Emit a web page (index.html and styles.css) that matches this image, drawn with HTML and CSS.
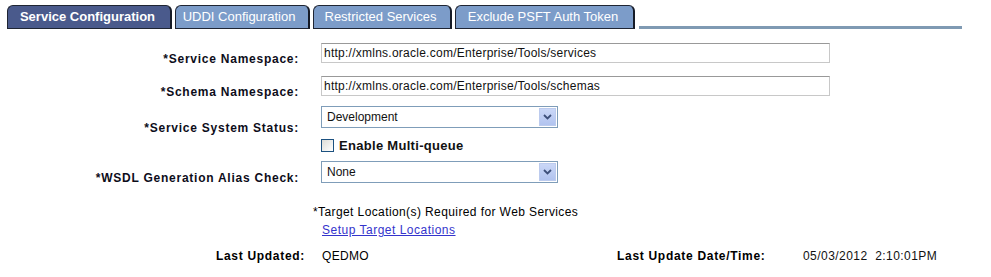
FILE: index.html
```html
<!DOCTYPE html>
<html>
<head>
<meta charset="utf-8">
<link rel="stylesheet" href="styles.css">
</head>
<body>
<div class="page">
  <div class="tabs">
    <div class="tab active t1">Service Configuration</div>
    <div class="tab t2">UDDI Configuration</div>
    <div class="tab t3">Restricted Services</div>
    <div class="tab t4">Exclude PSFT Auth Token</div>
    <div class="tab-line"></div>
  </div>

  <div class="form">
    <div class="row r1">
      <div class="label">*Service Namespace:</div>
      <div class="input wide">http://xmlns.oracle.com/Enterprise/Tools/services</div>
    </div>
    <div class="row r2">
      <div class="label">*Schema Namespace:</div>
      <div class="input wide">http://xmlns.oracle.com/Enterprise/Tools/schemas</div>
    </div>
    <div class="row r3">
      <div class="label low">*Service System Status:</div>
      <div class="select"><span class="sel-text">Development</span><span class="arrow"><svg width="9" height="6" viewBox="0 0 9 6"><path d="M1 1 L4.5 4.5 L8 1" fill="none" stroke="#3d4f7a" stroke-width="1.8"/></svg></span></div>
    </div>
    <div class="row r4">
      <div class="label"></div>
      <div class="check"><span class="box"></span><span class="check-label">Enable Multi-queue</span></div>
    </div>
    <div class="row r5">
      <div class="label mid">*WSDL Generation Alias Check:</div>
      <div class="select"><span class="sel-text">None</span><span class="arrow"><svg width="9" height="6" viewBox="0 0 9 6"><path d="M1 1 L4.5 4.5 L8 1" fill="none" stroke="#3d4f7a" stroke-width="1.8"/></svg></span></div>
    </div>
  </div>

  <div class="note">*Target Location(s) Required for Web Services</div>
  <div class="link-row"><a class="link" href="#">Setup Target Locations</a></div>

  <div class="footer">
    <div class="f-label">Last Updated:</div>
    <div class="f-value">QEDMO</div>
    <div class="f-label2">Last Update Date/Time:</div>
    <div class="f-value2">05/03/2012&nbsp; 2:10:01PM</div>
  </div>
</div>
</body>
</html>
```

FILE: styles.css
```css
html, body {
  margin: 0;
  padding: 0;
  background: #ffffff;
}
body {
  font-family: "Liberation Sans", Arial, sans-serif;
  font-size: 12px;
  color: #000000;
}
.page {
  padding: 5px 0 0 7px;
  width: 984px;
}
.tabs {
  display: flex;
  align-items: flex-end;
  height: 24px;
}
.tab {
  box-sizing: border-box;
  height: 24px;
  padding: 0 3px 0 0;
  margin-right: 3px;
  background: #7c9cc9;
  color: #ffffff;
  font-size: 13px;
  line-height: 22px;
  text-align: center;
  border: 1px solid #1f2533;
  border-right: 2px solid #151a26;
  border-radius: 6px 6px 0 0;
  white-space: nowrap;
}
.t1 { width: 165px; }
.t2 { width: 135px; padding-right: 6px; }
.t3 { width: 139px; }
.t4 { width: 180px; }
.tab.active {
  background: #4a5a8c;
  font-weight: bold;
}
.tab-line {
  width: 323px;
  height: 3px;
  background: #7f9ab3;
  margin-left: 1px;
  margin-bottom: 0;
}
.form {
  margin-top: 14px;
}
.row {
  display: flex;
  align-items: flex-start;
}
.label {
  width: 292px;
  text-align: right;
  font-weight: bold;
  font-size: 12px;
  line-height: 14px;
  letter-spacing: 0.75px;
  padding-top: 9px;
  margin-right: 22px;
  color: #0d0d1a;
}
.label.low { padding-top: 15px; }
.label.mid { padding-top: 10px; }
.r2 { margin-top: 10px; }
.r3 { margin-top: 7px; }
.r4 { margin-top: 3px; }
.r5 { margin-top: 9px; }
.r4 .label { padding-top: 0; }
.input {
  box-sizing: border-box;
  height: 20px;
  border: 1px solid #c8c8c8;
  border-top-color: #999999;
  padding-left: 2px;
  line-height: 18px;
  font-size: 12px;
  letter-spacing: 0.25px;
  color: #111111;
}
.wide { width: 509px; }
.select {
  box-sizing: border-box;
  width: 237px;
  height: 22px;
  border: 1px solid #7f9db9;
  display: flex;
  align-items: center;
  justify-content: space-between;
  padding: 0 1px 0 5px;
  color: #111111;
}
.arrow {
  width: 17px;
  height: 18px;
  box-sizing: border-box;
  background: linear-gradient(#cad7f7, #b1c3ef);
  border: 1px solid #bccbee;
  display: flex;
  align-items: center;
  justify-content: center;
}
.check {
  display: flex;
  align-items: center;
  height: 14px;
}
.box {
  box-sizing: border-box;
  width: 13px;
  height: 13px;
  border: 1px solid #1c5180;
  background: linear-gradient(135deg, #dcdcd7, #ffffff);
  margin-right: 5px;
}
.check-label {
  font-weight: bold;
  font-size: 13px;
  letter-spacing: 0.3px;
  color: #111111;
}
.note {
  margin-top: 20px;
  margin-left: 306px;
  font-size: 12px;
  letter-spacing: 0.4px;
}
.link-row {
  margin-top: 4px;
  margin-left: 315px;
}
.link {
  color: #3434cc;
  text-decoration: underline;
  font-size: 12px;
  letter-spacing: 0.5px;
}
.footer {
  display: flex;
  margin-top: 12px;
  font-size: 12px;
}
.f-label {
  width: 298px;
  text-align: right;
  font-weight: bold;
  letter-spacing: 0.7px;
  margin-right: 17px;
}
.f-value {
  width: 295px;
  letter-spacing: 0.3px;
}
.f-label2 {
  width: 186px;
  font-weight: bold;
  letter-spacing: 0.7px;
}
.f-value2 {
  color: #111111;
  letter-spacing: 0.45px;
}
```
